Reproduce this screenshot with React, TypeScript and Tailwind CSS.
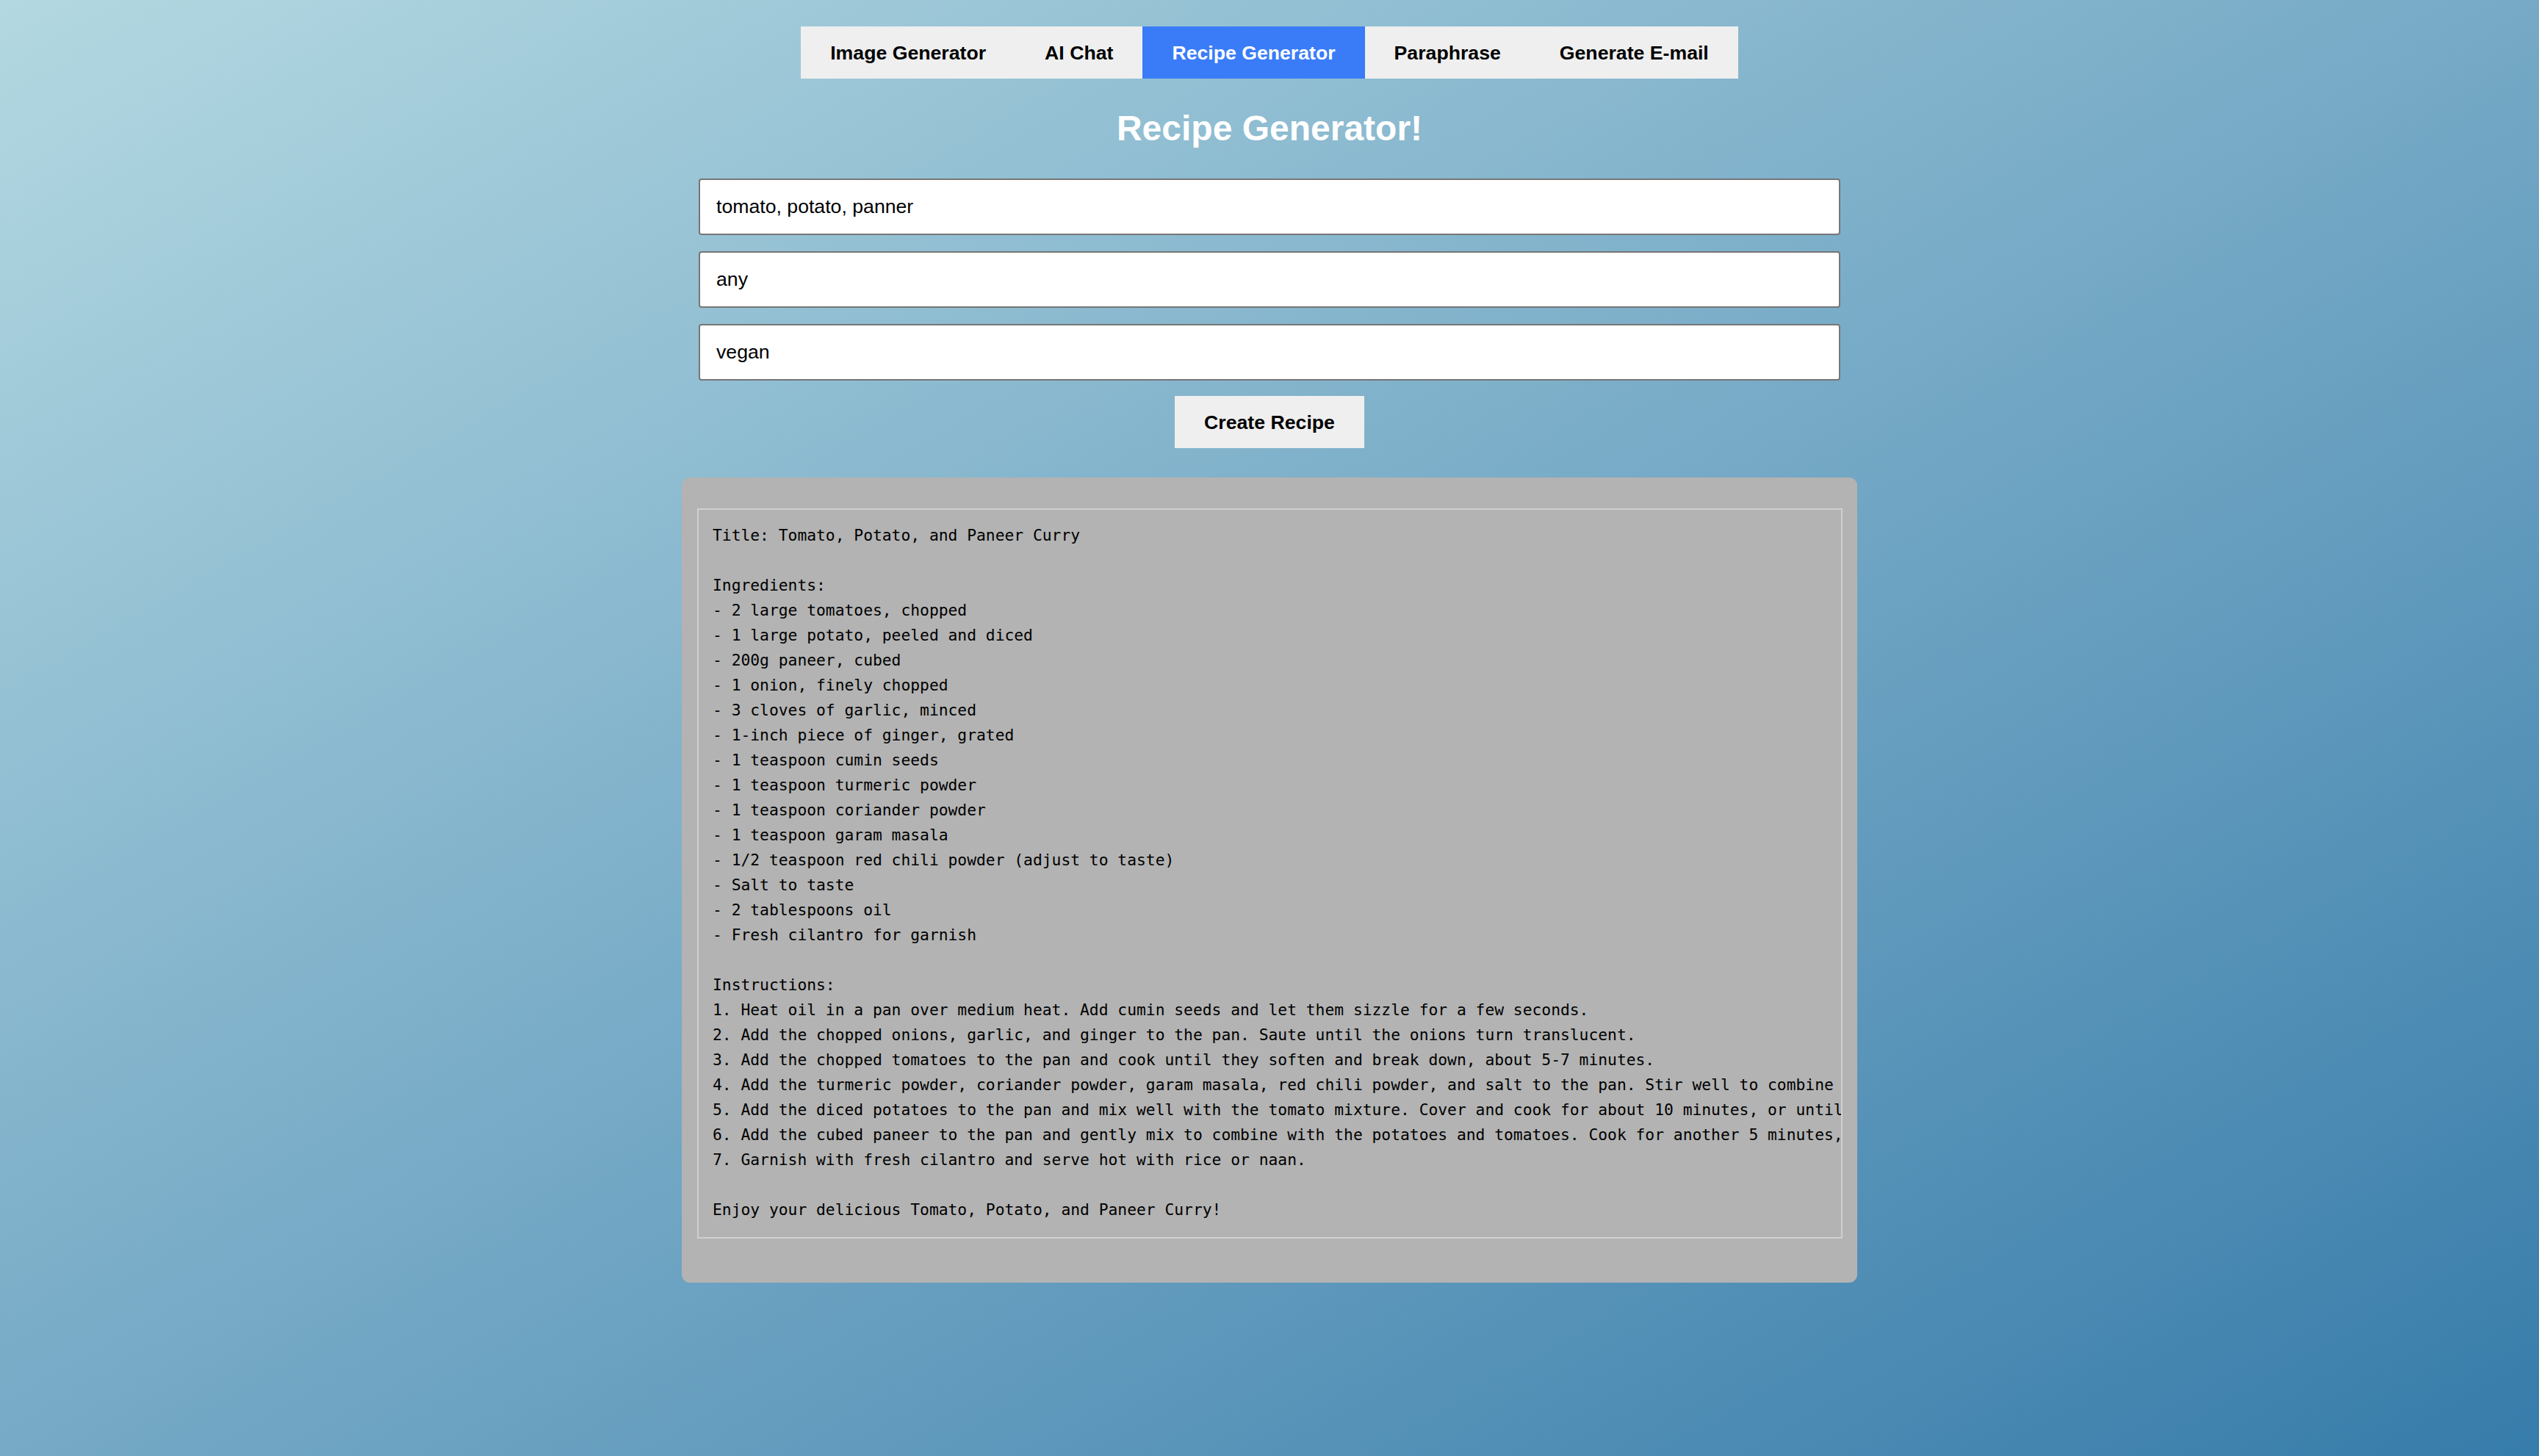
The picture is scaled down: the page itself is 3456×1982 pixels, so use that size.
import { useState } from 'react'

const tabs = ['Image Generator', 'AI Chat', 'Recipe Generator', 'Paraphrase', 'Generate E-mail']

const recipe = `Title: Tomato, Potato, and Paneer Curry

Ingredients:
- 2 large tomatoes, chopped
- 1 large potato, peeled and diced
- 200g paneer, cubed
- 1 onion, finely chopped
- 3 cloves of garlic, minced
- 1-inch piece of ginger, grated
- 1 teaspoon cumin seeds
- 1 teaspoon turmeric powder
- 1 teaspoon coriander powder
- 1 teaspoon garam masala
- 1/2 teaspoon red chili powder (adjust to taste)
- Salt to taste
- 2 tablespoons oil
- Fresh cilantro for garnish

Instructions:
1. Heat oil in a pan over medium heat. Add cumin seeds and let them sizzle for a few seconds.
2. Add the chopped onions, garlic, and ginger to the pan. Saute until the onions turn translucent.
3. Add the chopped tomatoes to the pan and cook until they soften and break down, about 5-7 minutes.
4. Add the turmeric powder, coriander powder, garam masala, red chili powder, and salt to the pan. Stir well to combine the spices.
5. Add the diced potatoes to the pan and mix well with the tomato mixture. Cover and cook for about 10 minutes, or until the potatoes are tender.
6. Add the cubed paneer to the pan and gently mix to combine with the potatoes and tomatoes. Cook for another 5 minutes, stirring occasionally.
7. Garnish with fresh cilantro and serve hot with rice or naan.

Enjoy your delicious Tomato, Potato, and Paneer Curry!`

export default function App() {
  const [active, setActive] = useState('Recipe Generator')
  const [ingredients, setIngredients] = useState('tomato, potato, panner')
  const [cuisine, setCuisine] = useState('any')
  const [diet, setDiet] = useState('vegan')

  return (
    <div className="min-h-screen bg-linear-to-br from-[#b3d8e1] to-[#367caa] flex flex-col items-center pt-[36px] font-['Liberation_Sans',Arial,sans-serif]">
      <nav className="flex h-[71px]">
        {tabs.map((t) => (
          <button
            key={t}
            onClick={() => setActive(t)}
            className={
              t === active
                ? 'px-[40px] bg-[#3a7cf7] text-white text-[26.67px] font-bold'
                : 'px-[40px] bg-[#efefef] text-black text-[26.67px] font-bold'
            }
          >
            {t}
          </button>
        ))}
      </nav>

      <h2 className="mt-[40px] text-[48px] leading-[55px] font-bold text-white">Recipe Generator!</h2>

      <div className="mt-[41px] flex flex-col gap-[22px]">
        <input
          value={ingredients}
          onChange={(e) => setIngredients(e.target.value)}
          className="w-[1554px] h-[77px] px-[22px] bg-white border-2 border-[#767676] rounded-[4px] text-[26.67px] text-black outline-none"
        />
        <input
          value={cuisine}
          onChange={(e) => setCuisine(e.target.value)}
          className="w-[1554px] h-[77px] px-[22px] bg-white border-2 border-[#767676] rounded-[4px] text-[26.67px] text-black outline-none"
        />
        <input
          value={diet}
          onChange={(e) => setDiet(e.target.value)}
          className="w-[1554px] h-[77px] px-[22px] bg-white border-2 border-[#767676] rounded-[4px] text-[26.67px] text-black outline-none"
        />
      </div>

      <button className="mt-[21px] h-[71px] px-[40px] bg-[#efefef] text-black text-[26.67px] font-bold">
        Create Recipe
      </button>

      <div className="mt-[40px] w-[1600px] bg-[#b3b3b3] rounded-[11px] pt-[42px] pb-[60px] pl-[21px] pr-[20px]">
        <pre className="border-2 border-[#d0d0d0] pt-[18px] pb-[20px] px-[19px] overflow-hidden whitespace-pre text-[21.3px] leading-[34px] text-black font-['DejaVu_Sans_Mono',monospace]">
          {recipe}
        </pre>
      </div>
    </div>
  )
}
